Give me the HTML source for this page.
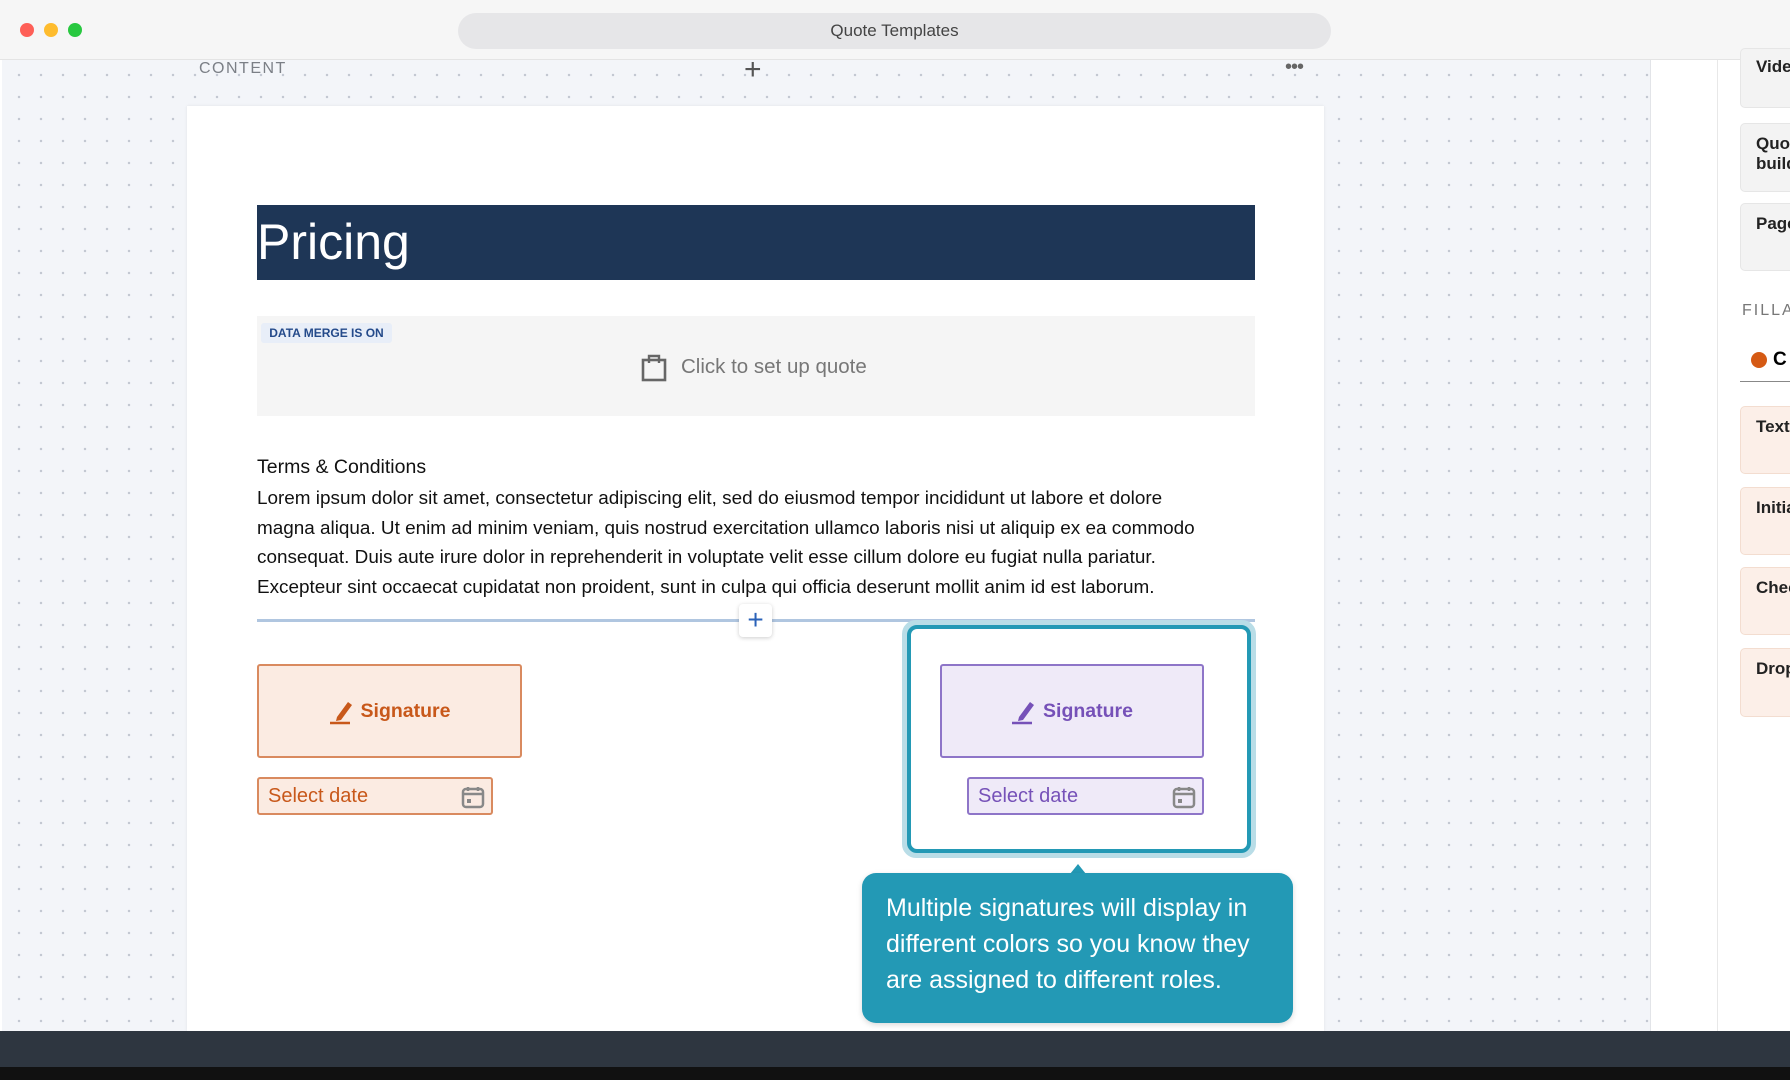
<!DOCTYPE html>
<html><head><meta charset="utf-8"><style>
*{box-sizing:border-box;margin:0;padding:0}
body{width:1790px;height:1080px;overflow:hidden;background:#fff;font-family:"Liberation Sans",Arial,sans-serif;position:relative}
.a{position:absolute}
.canvas{left:2px;top:60px;width:1648px;height:971px;background-color:#f3f5f9;background-image:radial-gradient(circle,#c3c8d2 1.1px,transparent 1.4px);background-size:22px 22px;background-position:6px 4px}
.sig{display:flex;align-items:center;justify-content:center;gap:6px;font-weight:bold;font-size:19.5px;border:2px solid;border-radius:3px}
.date{border:2px solid;border-radius:3px;font-size:20px;padding-left:9px;display:flex;align-items:center}
.card{left:1740px;width:60px;background:#f3f3f3;border-radius:5px;border:1px solid #e6e6e6;font-weight:bold;font-size:17px;color:#222;padding:10px 15px;line-height:20px}
.card.o{background:#fcefe8;border-color:#f3ddd0}
</style></head><body>
<div class="a" style="left:0;top:0;width:1790px;height:60px;background:#f6f6f6;border-bottom:1px solid #e4e4e4"></div>
<div class="a" style="left:20px;top:23px;width:14px;height:14px;border-radius:50%;background:#fe5f57"></div>
<div class="a" style="left:44px;top:23px;width:14px;height:14px;border-radius:50%;background:#febc2e"></div>
<div class="a" style="left:68px;top:23px;width:14px;height:14px;border-radius:50%;background:#28c840"></div>
<div class="a" style="left:458px;top:13px;width:873px;height:36px;border-radius:18px;background:#e6e6e8;text-align:center;line-height:36px;font-size:17px;color:#444">Quote Templates</div>

<div class="a canvas"></div>
<div class="a" style="left:199px;top:60px;font-size:16px;letter-spacing:1.5px;color:#7b7f86">CONTENT</div>
<div class="a" style="left:744px;top:55px;font-size:30px;color:#555;line-height:30px">+</div>
<div class="a" style="left:1285px;top:56px;font-size:20px;color:#666;letter-spacing:-1px">•••</div>

<div class="a" style="left:187px;top:106px;width:1137px;height:925px;background:#fff;box-shadow:0 0 3px rgba(0,0,0,.08)"></div>
<div class="a" style="left:257px;top:205px;width:998px;height:75px;background:#1e3656;color:#fff;font-size:50px;line-height:75px">Pricing</div>

<div class="a" style="left:257px;top:316px;width:998px;height:100px;background:#f5f5f5"></div>
<div class="a" style="left:261px;top:323px;width:131px;height:20px;background:#e8eef8;border-radius:3px;color:#244a8a;font-weight:bold;font-size:12px;line-height:20px;text-align:center">DATA MERGE IS ON</div>
<svg class="a" style="left:641px;top:352px" width="26" height="30" viewBox="0 0 26 30"><rect x="2" y="8" width="22" height="20" fill="none" stroke="#666" stroke-width="2.6"/><path d="M8 11V4h10v7" fill="none" stroke="#666" stroke-width="2.4"/></svg>
<div class="a" style="left:681px;top:355px;font-size:20.5px;color:#777">Click to set up quote</div>

<div class="a" style="left:257px;top:456px;font-size:19.5px;color:#111">Terms &amp; Conditions</div>
<div class="a" style="left:257px;top:484px;width:1100px;white-space:nowrap;font-size:18.9px;line-height:29.5px;color:#111">Lorem ipsum dolor sit amet, consectetur adipiscing elit, sed do eiusmod tempor incididunt ut labore et dolore<br>magna aliqua. Ut enim ad minim veniam, quis nostrud exercitation ullamco laboris nisi ut aliquip ex ea commodo<br>consequat. Duis aute irure dolor in reprehenderit in voluptate velit esse cillum dolore eu fugiat nulla pariatur.<br>Excepteur sint occaecat cupidatat non proident, sunt in culpa qui officia deserunt mollit anim id est laborum.</div>

<div class="a" style="left:257px;top:619px;width:998px;height:3px;background:#b0c6e0"></div>
<div class="a" style="left:739px;top:604px;width:33px;height:33px;background:#fff;border-radius:4px;box-shadow:0 1px 4px rgba(0,0,0,.2);color:#2a62b8;font-size:28px;line-height:31px;text-align:center">+</div>

<div class="a sig" style="left:257px;top:664px;width:265px;height:94px;background:#fbebe2;border-color:#d98a5f;color:#c8581a"><svg width="26" height="28" viewBox="0 0 26 28"><path d="M8 20l11-15 4 3-11 15-5 1z" fill="#c8581a"/><path d="M1 26h20" stroke="#c8581a" stroke-width="2.5"/></svg>Signature</div>
<div class="a date" style="left:257px;top:777px;width:236px;height:38px;background:#fbebe2;border-color:#d98a5f;color:#c8581a">Select date<svg style="position:absolute;right:6px;top:6px" width="24" height="24" viewBox="0 0 24 24"><rect x="2" y="4" width="20" height="18" rx="3" fill="none" stroke="#888" stroke-width="2.5"/><path d="M2 9h20M7 2v4M17 2v4" stroke="#888" stroke-width="2.5"/><rect x="6" y="14" width="4" height="4" fill="#888"/></svg></div>

<div class="a" style="left:902px;top:620px;width:354px;height:238px;border:6px solid #b9dde7;border-radius:14px"></div>
<div class="a" style="left:907px;top:625px;width:344px;height:228px;border:4px solid #2399b5;border-radius:10px;background:#fff"></div>
<div class="a sig" style="left:940px;top:664px;width:264px;height:94px;background:#efeaf8;border-color:#8e75c8;color:#7651b8"><svg width="26" height="28" viewBox="0 0 26 28"><path d="M8 20l11-15 4 3-11 15-5 1z" fill="#7651b8"/><path d="M1 26h20" stroke="#7651b8" stroke-width="2.5"/></svg>Signature</div>
<div class="a date" style="left:967px;top:777px;width:237px;height:38px;background:#efeaf8;border-color:#8e75c8;color:#7651b8">Select date<svg style="position:absolute;right:6px;top:6px" width="24" height="24" viewBox="0 0 24 24"><rect x="2" y="4" width="20" height="18" rx="3" fill="none" stroke="#888" stroke-width="2.5"/><path d="M2 9h20M7 2v4M17 2v4" stroke="#888" stroke-width="2.5"/><rect x="6" y="14" width="4" height="4" fill="#888"/></svg></div>

<div class="a" style="left:1070px;top:864px;width:0;height:0;border-left:8px solid transparent;border-right:8px solid transparent;border-bottom:10px solid #2399b5"></div>
<div class="a" style="left:862px;top:873px;width:431px;height:150px;background:#2399b5;border-radius:14px;color:#fff;font-size:25px;line-height:36px;padding:17px 14px 17px 24px;box-shadow:0 2px 6px rgba(0,0,0,.15)">Multiple signatures will display in different colors so you know they are assigned to different roles.</div>

<div class="a" style="left:1650px;top:60px;width:140px;height:971px;background:#fff;border-left:1px solid #e2e4e8"></div>
<div class="a" style="left:1717px;top:60px;width:1px;height:971px;background:#e8e8e8"></div>
<div class="a card" style="top:48px;height:60px;padding-top:8px">Video</div>
<div class="a card" style="top:123px;height:69px">Quote builder</div>
<div class="a card" style="top:203px;height:68px">Page</div>
<div class="a" style="left:1742px;top:302px;font-size:16px;letter-spacing:2px;color:#777">FILLABLE</div>
<div class="a" style="left:1751px;top:352px;width:16px;height:16px;border-radius:50%;background:#d55a14"></div>
<div class="a" style="left:1773px;top:349px;font-weight:bold;font-size:19px">C</div>
<div class="a" style="left:1740px;top:381px;width:50px;height:1px;background:#888"></div>
<div class="a card o" style="top:406px;height:68px">Text</div>
<div class="a card o" style="top:487px;height:68px">Initials</div>
<div class="a card o" style="top:567px;height:68px">Check</div>
<div class="a card o" style="top:648px;height:69px">Dropdown</div>

<div class="a" style="left:0;top:1031px;width:1790px;height:36px;background:#2e3640"></div>
<div class="a" style="left:0;top:1067px;width:1790px;height:13px;background:#111"></div>
</body></html>
